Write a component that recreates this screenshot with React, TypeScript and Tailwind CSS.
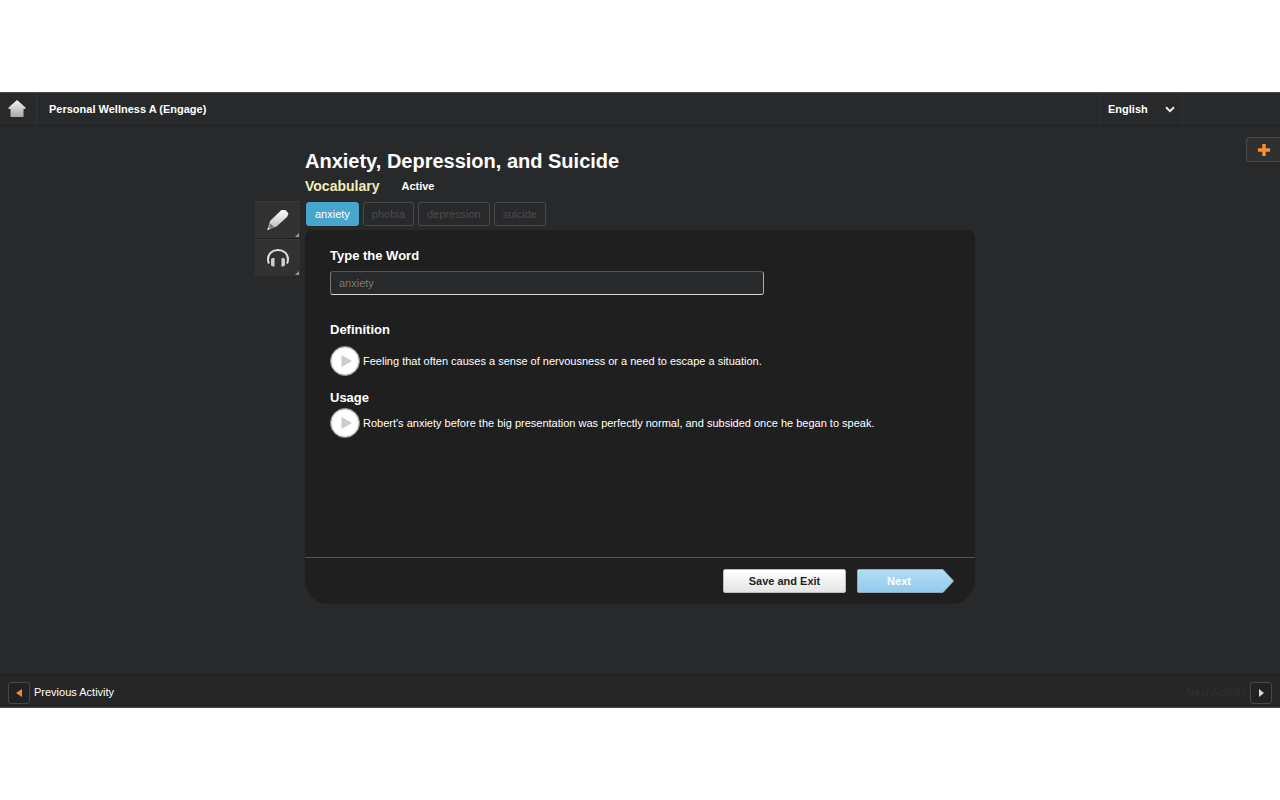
import { useState } from "react";

interface WordEntry {
  word: string;
  definition: string;
  usage: string;
}

const words: WordEntry[] = [
  {
    word: "anxiety",
    definition: "Feeling that often causes a sense of nervousness or a need to escape a situation.",
    usage: "Robert's anxiety before the big presentation was perfectly normal, and subsided once he began to speak.",
  },
  { word: "phobia", definition: "", usage: "" },
  { word: "depression", definition: "", usage: "" },
  { word: "suicide", definition: "", usage: "" },
];

function TopBar() {
  return (
    <header className="flex h-[34px] items-stretch border-t border-b border-t-[#4a4b4c] border-b-[#212223] bg-[#28292b]">
      <a
        href="#home"
        aria-label="Home"
        className="flex w-[37px] items-center justify-center border-r border-[#333435] pr-[2px]"
      >
        <svg width="18" height="18" viewBox="0 0 18 18">
          <defs>
            <linearGradient id="homeFill" x1="0" y1="0" x2="0" y2="1">
              <stop offset="0" stopColor="#f4f4f4" />
              <stop offset="1" stopColor="#a9a9a9" />
            </linearGradient>
          </defs>
          <path d="M9 0L17.500 7.500V9H15.500V17H2.500V9H0.500V7.500Z" fill="url(#homeFill)" />
        </svg>
      </a>
      <h1 className="flex flex-1 items-center pl-3 text-[11px] font-bold">Personal Wellness A (Engage)</h1>
      <div className="relative mr-[97px] flex w-[83px] items-center border-x border-[#2f3032]">
        <select
          aria-label="Language"
          defaultValue="en"
          className="h-full w-full appearance-none bg-transparent pl-[7px] text-[11px] font-bold text-white"
        >
          <option value="en">English</option>
        </select>
        <svg className="pointer-events-none absolute right-[7px]" width="10" height="7" viewBox="0 0 10 7">
          <path d="M1 1.200L5 5.200L9 1.200" fill="none" stroke="#eee" strokeWidth="2" />
        </svg>
      </div>
    </header>
  );
}

function ToolButtons() {
  const toolClass =
    "relative flex h-[37px] w-[45px] items-center justify-center border-t border-[#3a3a3a] bg-[#323232]";

  return (
    <div className="mt-[75px] mr-[5px] flex h-[75px] flex-col gap-px bg-[#202122]">
      <button type="button" aria-label="Highlighter" className={toolClass}>
        <svg width="24" height="24" viewBox="0 0 24 24">
          <defs>
            <linearGradient id="toolFill" x1="0" y1="0" x2="0" y2="1">
              <stop offset="0" stopColor="#ffffff" />
              <stop offset="1" stopColor="#b5b5b5" />
            </linearGradient>
          </defs>
          <path
            d="M15.500 2H18.500Q19.500 2 20.200 2.800L22 5Q22.600 5.800 22.200 6.800L21 9L10.500 18.500L1.500 22L4 13Z"
            fill="url(#toolFill)"
          />
          <path d="M3.800 15.200L8.400 18.900L3.200 20.700Z" fill="#777" />
          <path d="M2.200 19.600L3.900 21L1.200 22.200Z" fill="#eee" />
        </svg>
        <span className="absolute right-px bottom-px size-1 bg-[#9a9a9a] [clip-path:polygon(100%_0,100%_100%,0_100%)]" />
      </button>
      <button type="button" aria-label="Text to speech" className={toolClass}>
        <svg width="22" height="20" viewBox="0 0 22 20">
          <path
            d="M2 15.500Q1 13.500 1 11.500C1 5.500 5.500 2 11 2S21 5.500 21 11.500Q21 13.500 20 15.500"
            fill="none"
            stroke="#dedede"
            strokeWidth="2"
          />
          <path d="M7.500 10V18.500H6Q4 18.500 4 16.500V12Q4 10 6 10Z" fill="#cfcfcf" />
          <path d="M14.500 10V18.500H16Q18 18.500 18 16.500V12Q18 10 16 10Z" fill="#cfcfcf" />
        </svg>
        <span className="absolute right-px bottom-px size-1 bg-[#9a9a9a] [clip-path:polygon(100%_0,100%_100%,0_100%)]" />
      </button>
    </div>
  );
}

function PlayableText({ label, text }: { label: string; text: string }) {
  return (
    <div className="flex items-center gap-[3px]">
      <button
        type="button"
        aria-label={`Play ${label}`}
        className="flex size-[30px] shrink-0 items-center justify-center rounded-full border border-[#8a8a8a] bg-white shadow-[inset_0_0_2px_#999]"
      >
        <svg width="12" height="14" viewBox="0 0 12 14" className="ml-[3px]">
          <path d="M0.500 1L11 7L0.500 13Z" fill="#ccc" />
        </svg>
      </button>
      <p className="text-[11px]">{text}</p>
    </div>
  );
}

function BottomBar() {
  const arrowClass =
    "flex size-[22px] items-center justify-center rounded-[3px] border border-[#464646] bg-[#222]";

  return (
    <footer className="flex h-[34px] items-center justify-between border-t border-b border-t-[#1f2021] border-b-[#4a4a4a] bg-[#262626] px-2 pt-[3px] text-[11px]">
      <a href="#previous" className="flex items-center gap-1">
        <span className={arrowClass}>
          <svg width="6" height="8" viewBox="0 0 6 8">
            <path d="M6 0V8L0 4Z" fill="#f58a33" />
          </svg>
        </span>
        Previous Activity
      </a>
      <button type="button" disabled className="flex items-center gap-1 text-[#303030]">
        Next Activity
        <span className={arrowClass}>
          <svg width="5" height="8" viewBox="0 0 5 8">
            <path d="M0 0V8L5 4Z" fill="#d8d8d8" />
          </svg>
        </span>
      </button>
    </footer>
  );
}

export default function App() {
  const [active, setActive] = useState(0);
  const [typed, setTyped] = useState("");
  const entry = words[active];

  return (
    <div className="flex min-h-screen flex-col bg-white pt-[92px] pb-[92px] font-['Liberation_Sans',Arial,sans-serif] text-white">
      <TopBar />

      <main className="grid flex-1 grid-cols-[1fr_minmax(0,670px)_1fr] items-start bg-[#28292b]">
        <div className="flex justify-end">
          <ToolButtons />
        </div>

        <section className="pt-[22px] pb-4">
          <h2 className="text-[20px] leading-[26px] font-bold">Anxiety, Depression, and Suicide</h2>
          <div className="flex h-6 items-center gap-[22px]">
            <h3 className="text-[14px] font-bold text-[#f5ebb4]">Vocabulary</h3>
            <span className="text-[11px] font-bold">Active</span>
          </div>

          {/* Word tabs */}
          <div className="mt-1 ml-px flex gap-1">
            {words.map((item, i) => (
              <button
                key={item.word}
                type="button"
                disabled={i !== active}
                onClick={() => setActive(i)}
                className={`h-6 rounded-[3px] border px-2 text-[11px] ${
                  i === active
                    ? "border-[#48a6cd] bg-[#48a6cd] text-white"
                    : "border-[#47484a] text-[#4b4c4e]"
                }`}
              >
                {item.word}
              </button>
            ))}
          </div>

          <div className="mt-1 rounded-t-lg rounded-b-3xl bg-[#1f1f1f]">
            <div className="min-h-[327px] px-[25px] pt-4">
              <label htmlFor="word" className="block text-[13px] leading-5 font-bold">
                Type the Word
              </label>
              <input
                id="word"
                type="text"
                value={typed}
                placeholder={entry.word}
                onChange={(e) => setTyped(e.target.value)}
                className="mt-[5px] block h-6 w-full max-w-[434px] rounded-[3px] border border-t-[#555] border-r-[#aaa] border-b-[#d8d8d8] border-l-[#777] bg-[#28292b] px-2 text-[11px] placeholder:text-[#7a7a7a]"
              />

              <h4 className="mt-[25px] text-[13px] leading-5 font-bold">Definition</h4>
              <div className="mt-[6px]">
                <PlayableText label="definition" text={entry.definition} />
              </div>

              <h4 className="mt-3 text-[13px] leading-5 font-bold">Usage</h4>
              <PlayableText label="usage" text={entry.usage} />
            </div>

            <div className="flex h-[47px] items-center justify-end gap-[11px] border-t border-[#555] pr-[22px]">
              <button
                type="button"
                className="h-6 w-[123px] rounded-[2px] border border-[#bbb] bg-linear-to-b from-white to-[#e4e4e4] text-[11px] font-bold text-[#1f1f1f]"
              >
                Save and Exit
              </button>
              <button type="button" className="relative h-6 w-24 pr-3 text-[11px] font-bold text-white">
                <svg className="absolute inset-0" width="97" height="24" viewBox="0 0 97 24">
                  <defs>
                    <linearGradient id="nextFill" x1="0" y1="0" x2="0" y2="1">
                      <stop offset="0" stopColor="#b4def5" />
                      <stop offset="1" stopColor="#93caec" />
                    </linearGradient>
                  </defs>
                  <path
                    d="M1.500 0.500H86L96.500 12L86 23.500H1.500Q0.500 23.500 0.500 22.500V1.500Q0.500 0.500 1.500 0.500Z"
                    fill="url(#nextFill)"
                    stroke="#8eabba"
                  />
                </svg>
                <span className="relative">Next</span>
              </button>
            </div>
          </div>
        </section>

        <div className="flex justify-end pt-[11px]">
          <button
            type="button"
            aria-label="Open panel"
            className="flex h-[25px] w-[34px] items-center justify-center rounded-l-[4px] border border-r-0 border-[#45494e] bg-[#303030]"
          >
            <svg width="12" height="12" viewBox="0 0 12 12">
              <path d="M4.300 0H7.700V4.300H12V7.700H7.700V12H4.300V7.700H0V4.300H4.300Z" fill="#f78f35" />
            </svg>
          </button>
        </div>
      </main>

      <BottomBar />
    </div>
  );
}
